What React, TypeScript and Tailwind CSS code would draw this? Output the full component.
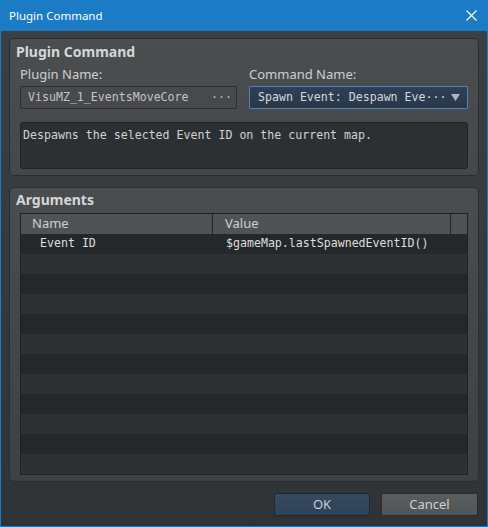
import React from 'react';

const ui = { fontFamily: '"Noto Sans", "Open Sans", sans-serif' };
const mono = { fontFamily: '"DejaVu Sans Mono", "Liberation Mono", monospace' };

const rows = [{ name: 'Event ID', value: '$gameMap.lastSpawnedEventID()' }];

export default function App() {
  const blank = Array.from({ length: 12 }, (_, i) => rows[i] ?? null);

  return (
    <div className="w-[488px] h-[527px] flex flex-col bg-[#1b7bc4]" style={ui}>
      {/* Title bar */}
      <div className="h-[31px] flex items-center justify-between pl-[9px] pr-[10px] text-white text-[11.5px]">
        <span>Plugin Command</span>
        <svg width="11" height="11" viewBox="0 0 11 11" className="mr-[1px]">
          <path d="M0.5 0.5 L10.5 10.5 M10.5 0.5 L0.5 10.5" stroke="white" strokeWidth="1.1" />
        </svg>
      </div>

      {/* Body */}
      <div className="flex-1 mx-[1px] mb-[1px] bg-gradient-to-b from-[#3d4043] to-[#303336] px-[8px] pt-[7px] flex flex-col">
        {/* Plugin Command group */}
        <div className="h-[138px] rounded-[5px] border border-[#2b2e30] bg-gradient-to-b from-[#4b4e51] to-[#45484b] px-[10px] pt-[4px] flex flex-col">
          <div className="h-[18px] -ml-[4px] text-[14px] font-bold leading-[18px] text-[#d6d6d6]">Plugin Command</div>
          <div className="mt-[4px] flex gap-[12px]">
            <div className="w-[217px] flex flex-col">
              <div className="h-[18px] text-[13px] leading-[18px] text-[#cfcfcf]">Plugin Name:</div>
              <div className="mt-[3px] h-[23px] rounded-[2px] border border-[#2a2c2e] bg-[#47494c] flex items-center justify-between pl-[7px] pr-[4px] text-[11.6px] text-[#c4c4c4]" style={mono}>
                <span>VisuMZ_1_EventsMoveCore</span>
                <span className="text-[#bdbdbd]">···</span>
              </div>
            </div>
            <div className="flex-1 flex flex-col">
              <div className="h-[18px] text-[13px] leading-[18px] text-[#cfcfcf]">Command Name:</div>
              <div className="mt-[3px] h-[23px] rounded-[1px] border border-[#4f84ba] bg-gradient-to-b from-[#2f4054] to-[#293849] flex items-center justify-between pl-[8px] pr-[7px] text-[11.6px] text-[#d4d8de]" style={mono}>
                <span>Spawn Event: Despawn Eve···</span>
                <svg width="9" height="7" viewBox="0 0 9 7">
                  <path d="M0 0 L9 0 L4.5 7 Z" fill="#aeb7c4" />
                </svg>
              </div>
            </div>
          </div>
          <div className="mt-[13px] h-[47px] rounded-[3px] border border-[#202325] bg-[#2d3033] px-[2px] pt-[4px] text-[11.6px] text-[#d2d2d2]" style={mono}>
            Despawns the selected Event ID on the current map.
          </div>
        </div>

        {/* Arguments group */}
        <div className="mt-[11px] h-[295px] rounded-[5px] border border-[#2b2e30] bg-gradient-to-b from-[#4a4d50] to-[#3e4144] px-[10px] pt-[3px] flex flex-col">
          <div className="h-[18px] -ml-[4px] text-[14px] font-bold leading-[18px] text-[#d6d6d6]">Arguments</div>
          <div className="mt-[4px] border border-[#1e2123] flex flex-col">
            <div className="h-[20px] flex bg-[#505356] text-[13px] text-[#cfcfcf] leading-[19px]">
              <div className="w-[192px] pl-[11px] border-r border-[#222527]">Name</div>
              <div className="w-[238px] pl-[12px] border-r border-[#222527]">Value</div>
              <div className="flex-1" />
            </div>
            {blank.map((r, i) => (
              <div
                key={i}
                className={`h-[20px] flex items-center text-[11.6px] text-[#dedede] ${i % 2 === 0 ? 'bg-[#25282b]' : 'bg-[#2e3134]'}`}
                style={mono}
              >
                <div className="w-[193px] pl-[19px]">{r?.name}</div>
                <div className="flex-1 pl-[12px]">{r?.value}</div>
              </div>
            ))}
          </div>
        </div>

        {/* Buttons */}
        <div className="mt-[11px] flex justify-end gap-[11px] pr-[1px]">
          <button className="w-[96px] h-[23px] rounded-[2px] border border-[#1d2834] bg-gradient-to-b from-[#36495f] to-[#304257] text-[13px] text-[#c9ced4]">
            OK
          </button>
          <button className="w-[97px] h-[23px] rounded-[2px] border border-[#2a2c2e] bg-gradient-to-b from-[#5a5d60] to-[#525558] text-[13px] text-[#cdd0d3]">
            Cancel
          </button>
        </div>
      </div>
    </div>
  );
}
